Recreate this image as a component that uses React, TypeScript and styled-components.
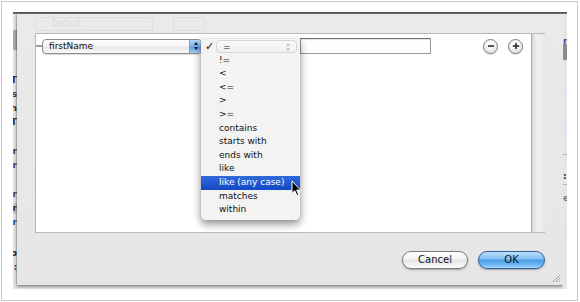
import styled, { createGlobalStyle } from 'styled-components';

const GlobalStyle = createGlobalStyle`
  html, body {
    margin: 0;
    padding: 0;
    background: #ffffff;
  }
  body {
    font-family: 'DejaVu Sans', 'Liberation Sans', sans-serif;
    color: #111;
  }
`;

const operators = [
  '!=',
  '<',
  '<=',
  '>',
  '>=',
  'contains',
  'starts with',
  'ends with',
  'like',
  'like (any case)',
  'matches',
  'within',
];

const leftBits = [
  { top: 61, text: 'T', color: '#333' },
  { top: 75, text: 's', color: '#444' },
  { top: 89, text: 'n', color: '#333' },
  { top: 103, text: 'T', color: '#333' },
  { top: 132, text: ':r', color: '#445' },
  { top: 146, text: ':r', color: '#445' },
  { top: 175, text: ':r', color: '#445' },
  { top: 189, text: 'r', color: '#333', shade: true },
  { top: 203, text: 'r', color: '#2a4fa0' },
  { top: 234, text: 'p', color: '#222' },
  { top: 248, text: ':', color: '#2a4fa0' },
];

function App() {
  return (
    <>
      <GlobalStyle />
      <Frame>
        <BackWindow>
          <TitleEdge />
          <WindowBody>
            <LeftStrip>
              <DarkPatch />
              {leftBits.map((b, i) => (
                <StripText key={i} style={{ top: b.top, color: b.color }} $shade={b.shade}>
                  {b.text}
                </StripText>
              ))}
            </LeftStrip>
            <Sheet>
              <GhostToolbar>
                <GhostPopup>Default</GhostPopup>
                <GhostSmall />
              </GhostToolbar>
              <EditorBox>
                <EditorContent>
                  <Row>
                    <Connector />
                    <PopupButton $width={160}>
                      <PopupLabel>firstName</PopupLabel>
                      <Stepper>
                        <Arrow $up />
                        <Arrow />
                      </Stepper>
                    </PopupButton>
                    <TextField />
                    <Spacer />
                    <RoundButton>
                      <svg width="14" height="14" viewBox="0 0 14 14">
                        <rect x="4" y="6.3" width="6" height="1.5" fill="#222" />
                      </svg>
                    </RoundButton>
                    <RoundButton>
                      <svg width="14" height="14" viewBox="0 0 14 14">
                        <rect x="3.8" y="6.3" width="6.4" height="1.5" fill="#222" />
                        <rect x="6.25" y="3.8" width="1.5" height="6.4" fill="#222" />
                      </svg>
                    </RoundButton>
                  </Row>

                  <Menu>
                    <FirstItem>
                      <Check>✓</Check>
                      <GhostPill>
                        <span>=</span>
                        <GhostArrows>
                          <Arrow $up $faint />
                          <Arrow $faint />
                        </GhostArrows>
                      </GhostPill>
                    </FirstItem>
                    {operators.map((op) => (
                      <MenuItem key={op} $selected={op === 'like (any case)'}>
                        {op}
                      </MenuItem>
                    ))}
                  </Menu>

                  <Cursor width="11" height="17" viewBox="0 0 11 17">
                    <path
                      d="M1 1 L1 13.5 L3.8 10.8 L5.9 15.6 L7.7 14.8 L5.7 10.1 L9.6 10.1 Z"
                      fill="#000"
                      stroke="#fff"
                      strokeWidth="1"
                      strokeLinejoin="round"
                    />
                  </Cursor>
                </EditorContent>
                <ScrollTrack />
              </EditorBox>

              <ButtonRow>
                <PushButton>Cancel</PushButton>
                <PushButton $primary>OK</PushButton>
              </ButtonRow>

              <Grip width="9" height="9" viewBox="0 0 9 9">
                <path d="M8 1 L1 8 M8 4 L4 8 M8 7 L7 8" stroke="#8a8a8a" strokeWidth="0.8" />
              </Grip>
            </Sheet>
            <RightStrip>
              <RightLetter style={{ top: 22, color: '#2a4fa0' }}>n</RightLetter>
              <RightBlock style={{ top: 30, height: 16, background: '#8c8c8c' }} />
              <RightBlock style={{ top: 70, height: 14, background: '#dde5f5' }} />
              <RightBlock style={{ top: 108, height: 14, background: '#dde5f5' }} />
              <RightBlock style={{ top: 140, height: 1, background: '#b0b0b0' }} />
              <RightLetter style={{ top: 157, color: '#222' }}>:F</RightLetter>
              <RightBlock style={{ top: 170, height: 1, background: '#b0b0b0' }} />
              <RightLetter style={{ top: 179, color: '#777' }}>e</RightLetter>
            </RightStrip>
          </WindowBody>
        </BackWindow>
      </Frame>
    </>
  );
}

const Frame = styled.div`
  box-sizing: border-box;
  margin: 1px 0 0 1px;
  width: 577px;
  height: 300px;
  border: 1px solid #c8c8c8;
  padding: 10px 10px 0 11px;
`;

const BackWindow = styled.div`
  display: flex;
  flex-direction: column;
  height: 277px;
  background: #ececec;
`;

const TitleEdge = styled.div`
  height: 2px;
  background: linear-gradient(to bottom, #4c4c4c, #7a7a7a);
`;

const WindowBody = styled.div`
  flex: 1;
  display: flex;
`;

const LeftStrip = styled.div`
  position: relative;
  width: 4px;
  overflow: hidden;
  background: #e4e4e4;
`;

const DarkPatch = styled.div`
  height: 20px;
  margin-top: 16px;
  background: #a9a9a9;
`;

const StripText = styled.div<{ $shade?: boolean }>`
  position: absolute;
  right: 0;
  font-size: 9px;
  line-height: 11px;
  font-weight: bold;
  white-space: nowrap;
  background: ${(p) => (p.$shade ? '#c9c9c9' : 'transparent')};
`;

const RightStrip = styled.div`
  position: relative;
  width: 4px;
  overflow: hidden;
  background: #e6e6e6;
`;

const RightLetter = styled.div`
  position: absolute;
  left: 0;
  font-size: 9px;
  line-height: 11px;
  font-weight: bold;
  white-space: nowrap;
`;

const RightBlock = styled.div`
  position: absolute;
  left: 0;
  width: 4px;
`;

const Sheet = styled.div`
  position: relative;
  flex: 1;
  height: 271px;
  box-sizing: border-box;
  display: flex;
  flex-direction: column;
  padding: 0 18px;
  background: linear-gradient(to bottom, #eaeaea, #e6e6e6);
  box-shadow: 0 2px 3px rgba(0, 0, 0, 0.4), -1px 0 1px rgba(0, 0, 0, 0.15),
    1px 0 1px rgba(0, 0, 0, 0.15);
`;

const GhostToolbar = styled.div`
  height: 19px;
  display: flex;
  align-items: center;
  gap: 20px;
  opacity: 0.07;
`;

const GhostPopup = styled.div`
  width: 100px;
  height: 12px;
  border: 1px solid #555;
  border-radius: 3px;
  font-size: 8px;
  line-height: 12px;
  padding-left: 16px;
`;

const GhostSmall = styled.div`
  width: 30px;
  height: 12px;
  border: 1px solid #555;
  border-radius: 3px;
`;

const EditorBox = styled.div`
  height: 200px;
  box-sizing: border-box;
  display: flex;
  border: 1px solid #b9b9b9;
  border-right: none;
`;

const EditorContent = styled.div`
  position: relative;
  flex: 1;
  background: #ffffff;
  padding-top: 4px;
`;

const ScrollTrack = styled.div`
  width: 13px;
  border-left: 1px solid #a9a9a9;
  background: linear-gradient(to right, #d6d6d6, #f2f2f2 40%, #e8e8e8);
`;

const Row = styled.div`
  display: flex;
  align-items: center;
  height: 16px;
  padding-right: 8px;
`;

const Connector = styled.div`
  width: 6px;
  height: 2px;
  background: #9d9d9d;
`;

const PopupButton = styled.div<{ $width: number }>`
  box-sizing: border-box;
  width: ${(p) => p.$width}px;
  height: 15px;
  display: flex;
  align-items: stretch;
  border: 1px solid #8e8e8e;
  border-radius: 4px;
  overflow: hidden;
  background: linear-gradient(to bottom, #ffffff, #f1f1f1 50%, #e4e4e4 51%, #fafafa);
  box-shadow: 0 1px 1px rgba(0, 0, 0, 0.15);
`;

const PopupLabel = styled.div`
  flex: 1;
  font-size: 9px;
  line-height: 13px;
  padding-left: 6px;
  color: #111;
`;

const Stepper = styled.div`
  width: 11px;
  display: flex;
  flex-direction: column;
  align-items: center;
  justify-content: center;
  gap: 2px;
  border-left: 1px solid #7c9ccc;
  background: linear-gradient(to bottom, #b9d6f6, #7aaeea 50%, #5b97e2 51%, #a6d0f8);
`;

const Arrow = styled.div<{ $up?: boolean; $faint?: boolean }>`
  width: 0;
  height: 0;
  border-left: 2px solid transparent;
  border-right: 2px solid transparent;
  ${(p) =>
    p.$up
      ? `border-bottom: 3px solid ${p.$faint ? '#c4c4c4' : '#1a1a1a'};`
      : `border-top: 3px solid ${p.$faint ? '#c4c4c4' : '#1a1a1a'};`}
`;

const TextField = styled.div`
  box-sizing: border-box;
  width: 131px;
  height: 16px;
  margin-left: 98px;
  border: 1px solid #9a9a9a;
  border-top-color: #6e6e6e;
  background: #fff;
  box-shadow: inset 0 1px 1px rgba(0, 0, 0, 0.12);
`;

const Spacer = styled.div`
  flex: 1;
`;

const RoundButton = styled.div`
  box-sizing: border-box;
  width: 15px;
  height: 15px;
  margin-left: 10px;
  border-radius: 50%;
  border: 1px solid #7d7d7d;
  background: radial-gradient(circle at 50% 30%, #ffffff, #ececec 60%, #d8d8d8);
  display: flex;
  align-items: center;
  justify-content: center;
  box-shadow: 0 1px 1px rgba(0, 0, 0, 0.15);
  & > svg {
    flex: none;
  }
`;

const Menu = styled.div`
  position: absolute;
  left: 165px;
  top: 5px;
  width: 99px;
  padding: 1px 0 3px;
  background: rgba(243, 243, 243, 0.97);
  border-radius: 0 0 5px 5px;
  box-shadow: 0 4px 9px rgba(0, 0, 0, 0.45), 0 0 1px rgba(0, 0, 0, 0.3);
`;

const FirstItem = styled.div`
  position: relative;
  height: 13.6px;
  display: flex;
  align-items: center;
`;

const Check = styled.span`
  width: 11px;
  padding-left: 4px;
  font-size: 11px;
  line-height: 13px;
  font-weight: bold;
  color: #111;
`;

const GhostPill = styled.div`
  box-sizing: border-box;
  width: 81px;
  height: 13px;
  display: flex;
  align-items: center;
  justify-content: space-between;
  padding: 0 6px 0 6px;
  border: 1px solid #d6d6d6;
  border-radius: 4px;
  background: linear-gradient(to bottom, #fafafa, #f0f0f0);
  font-size: 9px;
  color: #111;
`;

const GhostArrows = styled.div`
  display: flex;
  flex-direction: column;
  gap: 2px;
`;

const MenuItem = styled.div<{ $selected?: boolean }>`
  height: 13.6px;
  line-height: 13.6px;
  padding-left: 18px;
  font-size: 9px;
  white-space: nowrap;
  color: ${(p) => (p.$selected ? '#ffffff' : '#111111')};
  background: ${(p) =>
    p.$selected ? 'linear-gradient(to bottom, #2f6ad9, #1349c4)' : 'transparent'};
`;

const Cursor = styled.svg`
  position: absolute;
  left: 255px;
  top: 146px;
`;

const ButtonRow = styled.div`
  display: flex;
  justify-content: flex-end;
  gap: 10px;
  margin-top: 18px;
`;

const PushButton = styled.div<{ $primary?: boolean }>`
  box-sizing: border-box;
  width: ${(p) => (p.$primary ? 67 : 66)}px;
  height: 18px;
  border-radius: 9px;
  font-size: 10px;
  line-height: 16px;
  text-align: center;
  color: #111;
  border: 1px solid ${(p) => (p.$primary ? '#2f5f9e' : '#7b7b7b')};
  background: ${(p) =>
    p.$primary
      ? 'linear-gradient(to bottom, #bfe0fb, #7fbdf2 45%, #4a9be6 50%, #6fb6f2 80%, #a8dbff)'
      : 'linear-gradient(to bottom, #ffffff, #f3f3f3 45%, #e2e2e2 50%, #f4f4f4 80%, #ffffff)'};
  box-shadow: 0 1px 2px rgba(0, 0, 0, 0.3);
`;

const Grip = styled.svg`
  position: absolute;
  right: 2px;
  bottom: 2px;
`;

export default App;
